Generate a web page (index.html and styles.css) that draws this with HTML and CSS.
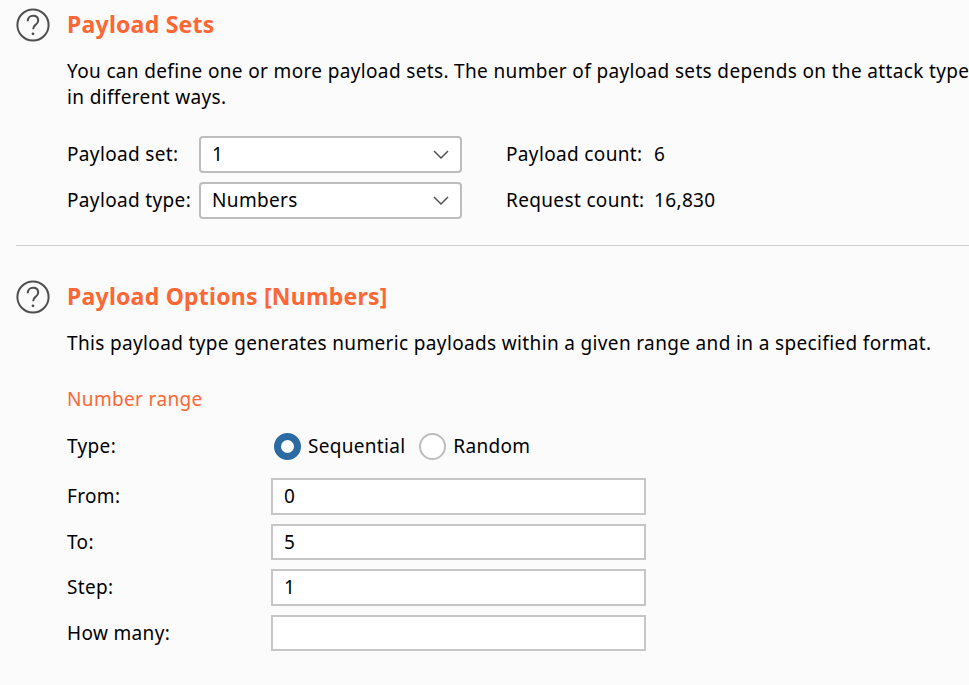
FILE: index.html
```html
<!DOCTYPE html>
<html lang="en">
<head>
<meta charset="utf-8">
<title>Payload Sets</title>
<link rel="stylesheet" href="styles.css">
</head>
<body>
<main class="page">
  <section class="section first">
    <svg class="help" viewBox="0 0 34 34"><circle cx="17" cy="17" r="15.6"/><path d="M11.8 13.2c0-3.300 2.200-5.400 5.300-5.400s5.100 1.900 5.100 4.600c0 2.200-1.100 3.300-2.700 4.500-1.600 1.200-2.400 2.200-2.400 4.300"/><circle class="dot" cx="17" cy="25.800" r="1.400"/></svg>
    <div class="body">
      <h2 class="title">Payload Sets</h2>
      <p class="desc">You can define one or more payload sets. The number of payload sets depends on the attack type<br>in different ways.</p>
      <div class="set-grid">
        <span class="label">Payload set:</span>
        <div class="select"><span>1</span><svg class="chev" viewBox="0 0 16 9"><path d="M1 1l7 7 7-7"/></svg></div>
        <span class="count-label">Payload count:</span><span class="count">6</span>
        <span class="label">Payload type:</span>
        <div class="select"><span>Numbers</span><svg class="chev" viewBox="0 0 16 9"><path d="M1 1l7 7 7-7"/></svg></div>
        <span class="count-label">Request count:</span><span class="count">16,830</span>
      </div>
    </div>
  </section>
  <hr class="rule">
  <section class="section second">
    <svg class="help" viewBox="0 0 34 34"><circle cx="17" cy="17" r="15.6"/><path d="M11.8 13.2c0-3.300 2.200-5.400 5.300-5.400s5.100 1.900 5.100 4.600c0 2.200-1.100 3.300-2.700 4.500-1.600 1.200-2.400 2.200-2.400 4.300"/><circle class="dot" cx="17" cy="25.800" r="1.400"/></svg>
    <div class="body">
      <h2 class="title">Payload Options [Numbers]</h2>
      <p class="desc">This payload type generates numeric payloads within a given range and in a specified format.</p>
      <h3 class="subtitle">Number range</h3>
      <div class="range-grid">
        <span class="label row-first">Type:</span>
        <div class="radios row-first">
          <span class="radio on"></span><span class="radio-text">Sequential</span>
          <span class="radio"></span><span class="radio-text">Random</span>
        </div>
        <span class="label">From:</span><div class="field">0</div>
        <span class="label">To:</span><div class="field">5</div>
        <span class="label">Step:</span><div class="field">1</div>
        <span class="label">How many:</span><div class="field"></div>
      </div>
    </div>
  </section>
</main>
</body>
</html>
```

FILE: styles.css
```css
* { box-sizing: border-box; }
html, body { margin: 0; height: 100%; }
body {
  background: #fbfbfb;
  color: #000;
  font-family: "Noto Sans", "Open Sans", sans-serif;
  font-size: 19px;
  letter-spacing: 0.35px;
  overflow: hidden;
}
.page { width: 969px; height: 685px; overflow: hidden; padding-top: 8px; }
.section { display: flex; padding-left: 16px; }
.help { width: 34px; height: 34px; flex: none; fill: none; stroke: #4f4f4f; stroke-width: 2; margin-right: 17px; }
.help .dot { fill: #4f4f4f; stroke: none; }
.body { flex: 1; min-width: 0; }
.title { margin: -1px 0 0; font-size: 23px; font-weight: 700; letter-spacing: 0.24px; line-height: 34px; color: #ff6633; white-space: nowrap; }
.desc { margin: 17px 0 0; line-height: 26px; white-space: nowrap; }
.set-grid {
  display: grid;
  grid-template-columns: 132px 263px 192px auto;
  grid-auto-rows: 37px;
  row-gap: 9px;
  margin-top: 26px;
  align-items: center;
}
.label { line-height: 26px; white-space: nowrap; }
.set-grid > span { padding-bottom: 2px; }
.select {
  height: 37px;
  display: flex;
  align-items: center;
  justify-content: space-between;
  padding: 0 11px 2px 11px;
  background: #fff;
  border: 2px solid #bdbdbd;
  border-radius: 4px;
}
.chev { width: 16px; height: 9px; margin-top: 2px; fill: none; stroke: #555; stroke-width: 1.5; }
.count-label { margin-left: 44px; white-space: nowrap; }
.rule { margin: 26px 0 34px 16px; border: 0; border-top: 1px solid #cfcfcf; }
.subtitle { margin: 30px 0 0; font-size: 19px; font-weight: 400; line-height: 26px; color: #ff6633; }
.range-grid {
  display: grid;
  grid-template-columns: 204px 375px;
  grid-template-rows: 41px;
  grid-auto-rows: 36.5px;
  row-gap: 9px;
  margin-top: 16px;
  align-items: center;
}
.row-first { align-self: start; height: 36px; line-height: 36px; }
.radios { display: flex; align-items: center; }
.radio { width: 27px; height: 27px; flex: none; border-radius: 50%; background: #fff; border: 2px solid #bdbdbd; margin-left: 3px; }
.radio.on { border: 7px solid #2b6aa3; }
.radio.on + .radio-text { margin-right: 11px; }
.radio-text { margin-left: 7px; }
.radio + .radio-text { letter-spacing: 0.3px; }
.field { height: 36.5px; line-height: 32px; padding-left: 11px; background: #fff; border: 2px solid #c6c6c6; }
```
